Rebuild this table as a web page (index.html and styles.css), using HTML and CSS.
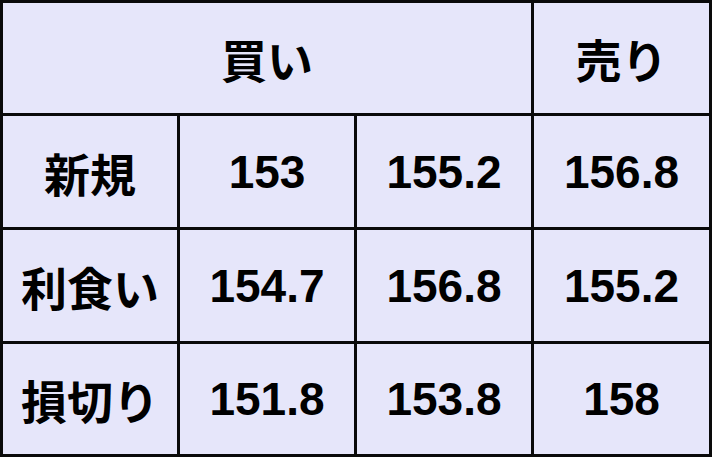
FILE: index.html
```html
<!DOCTYPE html>
<html lang="ja">
<head>
<meta charset="utf-8">
<link rel="stylesheet" href="styles.css">
</head>
<body>
<div class="table">
  <div class="cell head span3">買い</div>
  <div class="cell head">売り</div>
  <div class="cell">新規</div>
  <div class="cell">153</div>
  <div class="cell">155.2</div>
  <div class="cell">156.8</div>
  <div class="cell">利食い</div>
  <div class="cell">154.7</div>
  <div class="cell">156.8</div>
  <div class="cell">155.2</div>
  <div class="cell">損切り</div>
  <div class="cell">151.8</div>
  <div class="cell">153.8</div>
  <div class="cell">158</div>
</div>
</body>
</html>
```
FILE: styles.css
```css
html, body {
  margin: 0;
  padding: 0;
  background: #e6e6fa;
}
.table {
  width: 712px;
  height: 457px;
  box-sizing: border-box;
  display: grid;
  grid-template-columns: 174px 174px 174px 175px;
  grid-template-rows: 110px 111px 111px 110px;
  gap: 3px;
  padding: 3px;
  background: #0a0a0a;
  font-family: "Liberation Sans", "Noto Sans CJK JP", sans-serif;
  font-weight: bold;
  font-size: 46px;
  color: #000;
}
.cell {
  background: #e6e6fa;
  display: flex;
  align-items: center;
  justify-content: center;
}
.span3 {
  grid-column: span 3;
}
```
